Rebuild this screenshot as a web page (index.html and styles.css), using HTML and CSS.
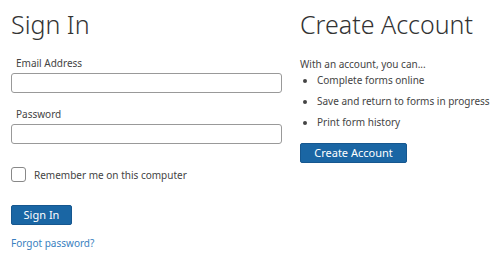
FILE: index.html
```html
<!DOCTYPE html>
<html>
<head>
<meta charset="utf-8">
<link rel="stylesheet" href="styles.css">
</head>
<body>
<div class="page">
  <section class="signin">
    <h1 class="title">Sign In</h1>
    <div class="field">
      <label class="label">Email Address</label>
      <input class="input" type="text">
    </div>
    <div class="field">
      <label class="label">Password</label>
      <input class="input" type="password">
    </div>
    <div class="remember">
      <span class="checkbox"></span>
      <span class="remember-text">Remember me on this computer</span>
    </div>
    <button class="btn btn-signin">Sign In</button>
    <a class="forgot" href="#">Forgot password?</a>
  </section>
  <section class="create">
    <h1 class="title">Create Account</h1>
    <p class="intro">With an account, you can...</p>
    <ul class="list">
      <li>Complete forms online</li>
      <li>Save and return to forms in progress</li>
      <li>Print form history</li>
    </ul>
    <button class="btn btn-create">Create Account</button>
  </section>
</div>
</body>
</html>
```
FILE: styles.css
```css
html, body {
  margin: 0;
  padding: 0;
  background: #fff;
}
body {
  font-family: "Noto Sans", "Open Sans", sans-serif;
  font-size: 10px;
  color: #444;
}
.page {
  display: flex;
  gap: 18px;
  padding: 6px 0 0 11px;
}
.signin {
  width: 271px;
  flex: none;
  display: flex;
  flex-direction: column;
}
.create {
  flex: 1;
  display: flex;
  flex-direction: column;
  white-space: nowrap;
}
.title {
  margin: 0;
  font-size: 25px;
  font-weight: 300;
  line-height: 36px;
  color: #333;
}
.field {
  display: flex;
  flex-direction: column;
}
.field:first-of-type {
  margin-top: 13px;
}
.label {
  padding-left: 5px;
  line-height: 17px;
  margin-bottom: 1px;
}
.input {
  box-sizing: border-box;
  height: 20px;
  width: 271px;
  margin: 0;
  border: 1px solid #999;
  border-radius: 3px;
  padding: 0 4px;
  font: inherit;
}
.field + .field {
  margin-top: 13px;
}
.remember {
  display: flex;
  align-items: center;
  gap: 8px;
  margin-top: 23px;
  height: 15px;
}
.checkbox {
  box-sizing: border-box;
  width: 15px;
  height: 15px;
  border: 1px solid #888;
  border-radius: 3px;
  background: #fff;
}
.btn {
  box-sizing: border-box;
  height: 20px;
  margin: 0;
  border: 1px solid #16578f;
  border-radius: 2px;
  background: #1a66a4;
  color: #fff;
  font: inherit;
  font-size: 11px;
  line-height: 18px;
  padding: 0;
  align-self: flex-start;
}
.btn-signin {
  margin-top: 23px;
  width: 61px;
}
.forgot {
  margin-top: 10px;
  color: #3a7fc0;
  text-decoration: none;
  line-height: 17px;
  align-self: flex-start;
}
.intro {
  margin: 14px 0 0 0;
  line-height: 17px;
}
.list {
  margin: 0;
  padding-left: 17px;
}
.list li {
  line-height: 16px;
  margin-top: 5px;
}
.list li:first-child {
  margin-top: -1px;
}
.btn-create {
  margin-top: 13px;
  width: 107px;
}
```
